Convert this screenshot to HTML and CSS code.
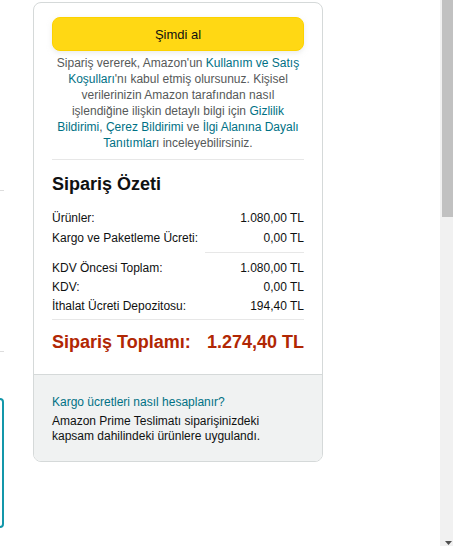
FILE: index.html
```html
<!DOCTYPE html>
<html lang="tr">
<head>
<meta charset="utf-8">
<link rel="stylesheet" href="styles.css">
</head>
<body>
<div class="page">
  <div class="left-col">
    <div class="left-inner">
      <div class="l-sec l-sec1"></div>
      <div class="l-sec l-sec2"></div>
      <div class="l-box"></div>
    </div>
  </div>
  <div class="card">
    <div class="card-main">
      <button class="buy-btn">Şimdi al</button>
      <p class="legal">Sipariş vererek, Amazon'un <a>Kullanım ve Satış Koşulları</a>'nı kabul etmiş olursunuz. Kişisel verilerinizin Amazon tarafından nasıl işlendiğine ilişkin detaylı bilgi için <a>Gizlilik Bildirimi</a>, <a>Çerez Bildirimi</a> ve <a>İlgi Alanına Dayalı Tanıtımlar</a>ı inceleyebilirsiniz.</p>
      <hr class="divider">
      <h2 class="title">Sipariş Özeti</h2>
      <div class="rows rows-a">
        <div class="row"><span>Ürünler:</span><span>1.080,00 TL</span></div>
        <div class="row"><span>Kargo ve Paketleme Ücreti:</span><span>0,00 TL</span></div>
      </div>
      <hr class="divider partial">
      <div class="rows rows-b">
        <div class="row"><span>KDV Öncesi Toplam:</span><span>1.080,00 TL</span></div>
        <div class="row"><span>KDV:</span><span>0,00 TL</span></div>
        <div class="row"><span>İthalat Ücreti Depozitosu:</span><span>194,40 TL</span></div>
      </div>
      <hr class="divider full">
      <div class="total"><span>Sipariş Toplamı:</span><span>1.274,40 TL</span></div>
    </div>
    <div class="card-foot">
      <a class="foot-link">Kargo ücretleri nasıl hesaplanır?</a>
      <p class="foot-text">Amazon Prime Teslimatı siparişinizdeki kapsam dahilindeki ürünlere uygulandı.</p>
    </div>
  </div>
</div>
<div class="scrollbar">
  <div class="thumb"></div>
  <svg class="arrow" width="7" height="4" viewBox="0 0 7 4"><path d="M0 0H7L3.5 4Z" fill="#505050"/></svg>
</div>
</body>
</html>
```

FILE: styles.css
```css
html, body {
  margin: 0;
  padding: 0;
  height: 546px;
  overflow: hidden;
  background: #fff;
}
body {
  font-family: "Liberation Sans", Arial, sans-serif;
  color: #0f1111;
  font-size: 12px;
  position: relative;
}
.page {
  display: flex;
  gap: 29px;
  align-items: flex-start;
  padding-top: 2px;
}
.left-col {
  width: 4px;
  overflow: hidden;
  flex: none;
  margin-top: -2px;
}
.left-inner {
  width: 300px;
  margin-left: -296px;
}
.l-sec {
  border-bottom: 1px solid #dddddd;
}
.l-sec1 { height: 190px; }
.l-sec2 { height: 160px; }
.l-box {
  margin-top: 46px;
  height: 126px;
  border: 2px solid #1397aa;
  border-radius: 4px;
}
.card {
  width: 288px;
  border: 1px solid #d5d9d9;
  border-radius: 8px;
  overflow: hidden;
  flex: none;
}
.card-main {
  padding: 14px 18px 20px;
}
.buy-btn {
  display: block;
  width: 100%;
  height: 34px;
  border: 1px solid #fcd200;
  border-radius: 8px;
  background: #ffd814;
  font-family: inherit;
  font-size: 13px;
  color: #0f1111;
  padding: 0;
  box-shadow: 0 2px 5px rgba(213, 217, 217, 0.5);
}
.legal {
  margin: 4px 0 0;
  text-align: center;
  color: #565959;
  font-size: 12px;
  line-height: 16px;
}
.legal a {
  color: #007185;
}
.divider {
  border: 0;
  border-top: 1px solid #e7e7e7;
  margin: 8px 0 0;
  height: 0;
}
.title {
  margin: 12px 0 0;
  font-size: 18px;
  line-height: 24px;
  font-weight: bold;
}
.rows {
  display: flex;
  flex-direction: column;
}
.rows-a {
  margin-top: 14px;
  gap: 4px;
}
.rows-b {
  margin-top: 7px;
  gap: 3px;
}
.row {
  display: flex;
  justify-content: space-between;
  line-height: 16px;
}
.divider.partial {
  margin: 6px 0 0 auto;
  width: 99px;
}
.divider.full {
  margin-top: 5px;
}
.total {
  margin-top: 10px;
  display: flex;
  justify-content: space-between;
  font-size: 18px;
  line-height: 24px;
  font-weight: bold;
  color: #b12704;
}
.card-foot {
  background: #f0f2f2;
  border-top: 1px solid #d5d9d9;
  padding: 19px 18px 17px;
}
.foot-link {
  display: block;
  color: #007185;
  line-height: 16px;
}
.foot-text {
  margin: 4px 0 0;
  line-height: 15px;
}
.scrollbar {
  position: absolute;
  right: 0;
  top: 0;
  width: 13px;
  height: 546px;
  background: #f1f1f1;
}
.thumb {
  margin-left: 2px;
  height: 217px;
  background: #c1c1c1;
}
.arrow {
  position: absolute;
  left: 5px;
  bottom: 1px;
}
```
